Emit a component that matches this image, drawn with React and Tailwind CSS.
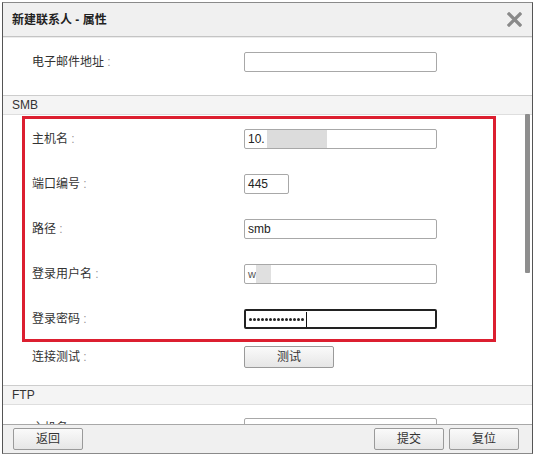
import React from "react";

const font = "font-['Liberation_Sans','Noto_Sans_CJK_SC',sans-serif]";

function Label({ children }) {
  return (
    <div className="w-[212px] shrink-0 text-[12px] leading-[20px] text-[#333]">
      {children}
      <span className="text-[#999]"> :</span>
    </div>
  );
}

function Input({ w = "w-[193px]", children, focused }) {
  return (
    <div
      className={`${w} h-[20px] bg-white rounded-[2px] flex items-center pl-[3px] text-[12px] text-[#222] overflow-hidden ${
        focused ? "border-2 border-[#222]" : "border border-[#a8a8a8]"
      }`}
    >
      {children}
    </div>
  );
}

function Btn({ children, w = "w-[70px]" }) {
  return (
    <div
      className={`${w} h-[22px] rounded-[2px] border border-[#9a9a9a] bg-gradient-to-b from-[#fafafa] to-[#e6e6e6] flex items-center justify-center text-[12px] text-[#333]`}
    >
      {children}
    </div>
  );
}

function Row({ label, children, className = "" }) {
  return (
    <div className={`flex items-center ${className}`}>
      <Label>{label}</Label>
      {children}
    </div>
  );
}

function Header({ children, className = "" }) {
  return (
    <div
      className={`h-[20px] border-t border-b border-t-[#cdcdcd] border-b-[#dedede] bg-[#f4f4f4] pl-[9px] text-[12px] leading-[18px] text-[#333] ${className}`}
    >
      {children}
    </div>
  );
}

export default function App() {
  return (
    <div className={`w-[535px] h-[456px] bg-white ${font} overflow-hidden`}>
      <div className="ml-[2px] mt-[2px] w-[531px] h-[452px] border border-[#8a8a8a] border-l-[#555] border-r-[#555] flex flex-col">
        {/* title bar */}
        <div className="h-[34px] shrink-0 bg-[#f0f0f0] border-b border-[#c4c4c4] flex items-center justify-between pl-[9px] pr-[10px]">
          <span className="text-[12px] font-bold text-[#222]">新建联系人 - 属性</span>
          <svg width="15" height="15" viewBox="0 0 15 15">
            <path d="M2 2 L13 13 M13 2 L2 13" stroke="#8a8a8a" strokeWidth="3.2" strokeLinecap="square" />
          </svg>
        </div>

        {/* content */}
        <div className="relative flex-1 overflow-hidden border-t border-[#ececec]">
          <div className="pt-[14px]">
            <Row label="电子邮件地址" className="pl-[29px]">
              <Input />
            </Row>

            <Header className="mt-[23px]">SMB</Header>

            <div className="ml-[19px] mt-[1px] w-[474px] border-[3px] border-[#dc1f30] pl-[7px] pt-[10px] pb-[10px] flex flex-col gap-[25px]">
              <Row label="主机名">
                <Input>
                  <span>10.</span>
                  <span className="ml-[2px] w-[60px] h-[18px] bg-[#dcdcdc]" />
                </Input>
              </Row>
              <Row label="端口编号">
                <Input w="w-[45px]">445</Input>
              </Row>
              <Row label="路径">
                <Input>smb</Input>
              </Row>
              <Row label="登录用户名">
                <Input>
                  <span className="text-[11px] text-[#555]">w</span>
                  <span className="w-[15px] h-[18px] bg-[#e0e0e0]" />
                </Input>
              </Row>
              <Row label="登录密码">
                <Input focused>
                  <div className="flex items-center gap-[1px]">
                    {Array.from({ length: 14 }).map((_, i) => (
                      <span key={i} className="w-[3px] h-[3px] rounded-full bg-[#222]" />
                    ))}
                  </div>
                  <span className="ml-[2px] w-[1px] h-[15px] bg-[#111]" />
                </Input>
              </Row>
            </div>

            <Row label="连接测试" className="pl-[29px] mt-[4px]">
              <Btn w="w-[90px]">测试</Btn>
            </Row>

            <Header className="mt-[17px]">FTP</Header>

            <Row label="主机名" className="pl-[29px] mt-[13px]">
              <Input />
            </Row>
          </div>

          {/* scrollbar thumb */}
          <div className="absolute left-[522px] top-[76px] w-[5px] h-[159px] rounded-[1px] bg-[#8e8e8e]" />
        </div>

        {/* footer */}
        <div className="h-[29px] shrink-0 bg-[#f0f0f0] border-t border-[#a8a8a8] flex items-center justify-between pl-[10px] pr-[13px]">
          <Btn>返回</Btn>
          <div className="flex gap-[5px]">
            <Btn>提交</Btn>
            <Btn>复位</Btn>
          </div>
        </div>
      </div>
    </div>
  );
}
